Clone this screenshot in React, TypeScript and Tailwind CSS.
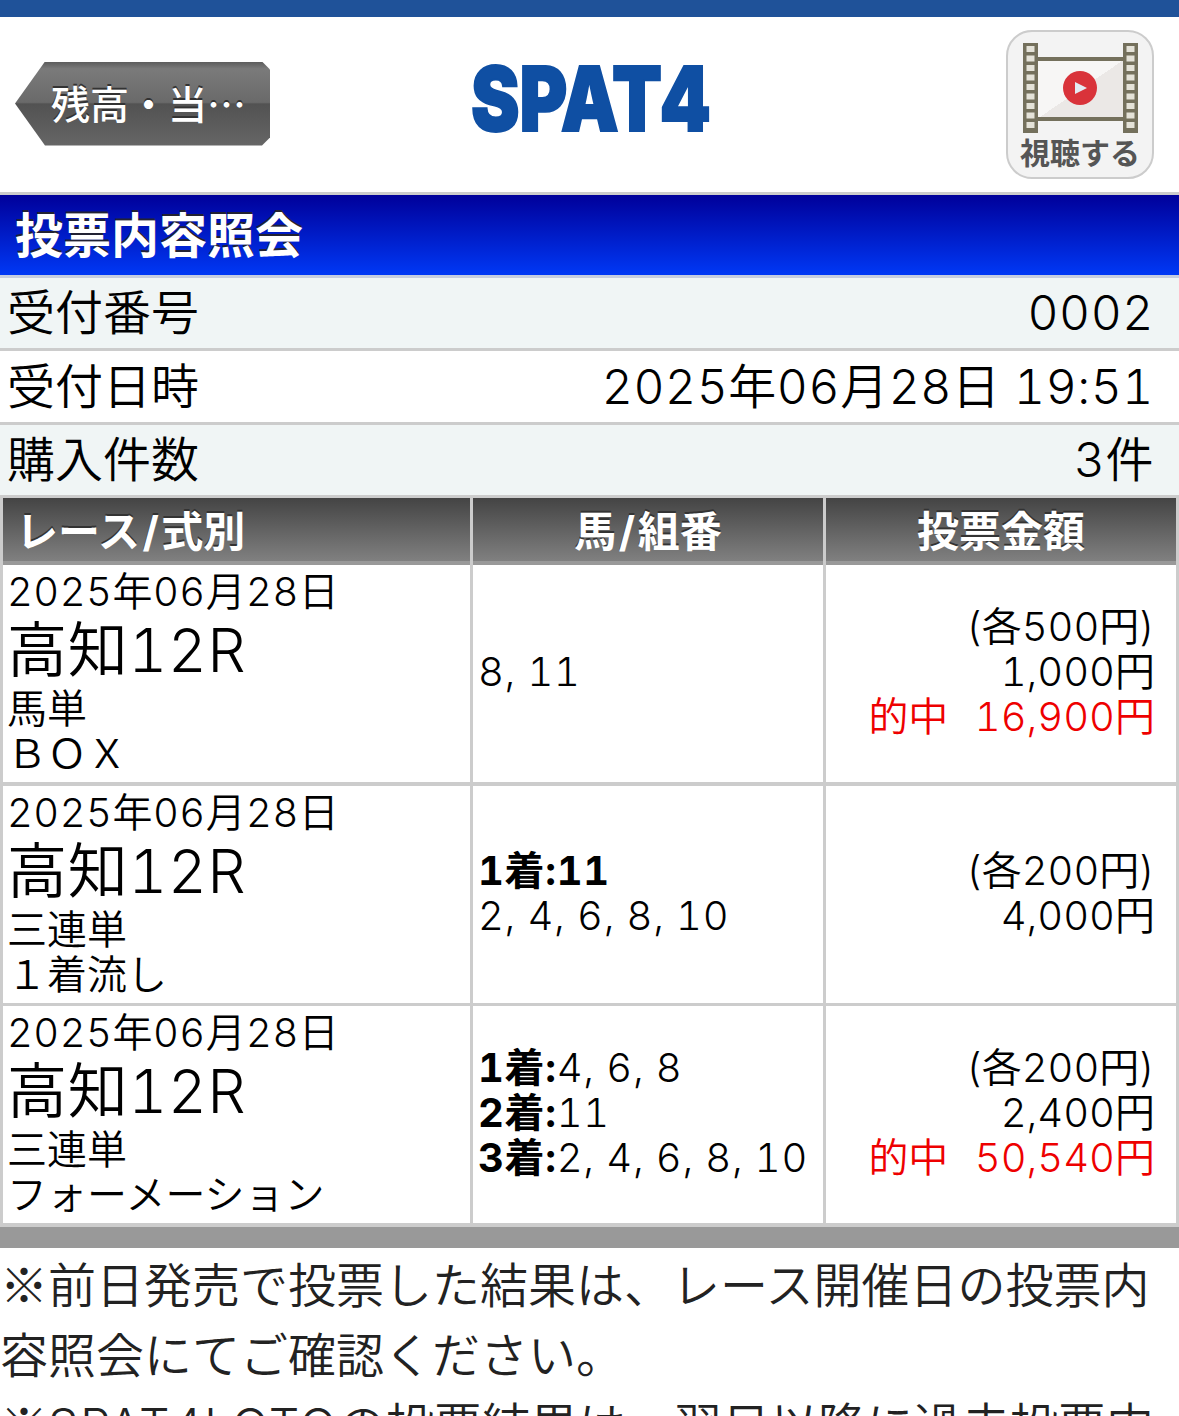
const latin = "font-['Inter','Noto_Sans_CJK_JP',sans-serif] tabular-nums";
const cjk = "font-['Noto_Sans_CJK_JP',sans-serif]";

type Row = {
  race: string;
  kind: string;
  detail: React.ReactNode;
  amounts: { each: string; total: string; win?: string };
};

const rows: Row[] = [
  {
    race: "馬単",
    kind: "ＢＯＸ",
    detail: <div>8, 11</div>,
    amounts: { each: "(各500円)", total: "1,000円", win: "16,900円" },
  },
  {
    race: "三連単",
    kind: "１着流し",
    detail: (
      <>
        <div className="font-bold">1着:11</div>
        <div>2, 4, 6, 8, 10</div>
      </>
    ),
    amounts: { each: "(各200円)", total: "4,000円" },
  },
  {
    race: "三連単",
    kind: "フォーメーション",
    detail: (
      <>
        <div><b className="font-bold">1着:</b>4, 6, 8</div>
        <div><b className="font-bold">2着:</b>11</div>
        <div><b className="font-bold">3着:</b>2, 4, 6, 8, 10</div>
      </>
    ),
    amounts: { each: "(各200円)", total: "2,400円", win: "50,540円" },
  },
];

const heads = [
  { key: "race", label: <>レース<span className="mx-[2.5px]">/</span>式別</> },
  { key: "combo", label: <>馬<span className="mx-[2.5px]">/</span>組番</> },
  { key: "amount", label: "投票金額" },
];

function InfoRow({ label, value, alt, tall }: { label: string; value: string; alt?: boolean; tall?: boolean }) {
  return (
    <div
      className={`box-content flex items-center justify-between border-b-[3px] border-[#ccc] pr-[25px] pl-[7px] text-[48px] leading-none font-[350] text-black ${
        tall ? "h-[71px]" : "h-[70px]"
      } ${alt ? "bg-[#f0f5f5]" : "bg-white"}`}
    >
      <span>{label}</span>
      <span className="tracking-[0.012em]">{value}</span>
    </div>
  );
}

function FilmIcon() {
  const holes = [3, 12.5, 22, 31.5, 41, 50.5, 60, 69.5, 79];
  return (
    <svg viewBox="0 0 115 90" className="h-[90px] w-[115px]">
      <defs>
        <linearGradient id="frame" x1="0" y1="0" x2="1" y2="1">
          <stop offset="0.5" stopColor="#f7f6f5" />
          <stop offset="0.5" stopColor="#ebe8e6" />
        </linearGradient>
      </defs>
      <rect x="14" y="16" width="88" height="60" fill="url(#frame)" />
      <rect x="0" y="0" width="15" height="90" fill="#74705c" />
      <rect x="100" y="0" width="15" height="90" fill="#74705c" />
      <rect x="14" y="14" width="88" height="4" fill="#74705c" />
      <rect x="14" y="74" width="88" height="4" fill="#74705c" />
      {holes.map((y) => (
        <g key={y} fill="#e4e2d8">
          <rect x="3.5" y={y} width="8" height="6" />
          <rect x="103.5" y={y} width="8" height="6" />
        </g>
      ))}
      <circle cx="57" cy="45" r="17" fill="#d9333a" />
      <path d="M52 39 L64 45 L52 51 Z" fill="#e3ebf2" />
    </svg>
  );
}

export default function App() {
  return (
    <div lang="ja" className={`h-[1416px] w-[1179px] overflow-hidden bg-white ${latin}`}>
      <div className="h-[17px] bg-[#1f5299]" />

      <header className="box-content flex h-[175px] items-center border-b-[3px] border-[#ccc] pr-[25px] pl-[15px]">
        <a
          className={`mb-[2px] flex h-[84px] w-[255px] items-center bg-[linear-gradient(#5c5c5c_0%,#7a7a7a_8%,#6a6a6a_48%,#525252_50%,#666_100%)] pb-[2px] pl-[36px] text-[39px] font-medium whitespace-nowrap text-white [clip-path:polygon(30px_0,calc(100%-8px)_0,100%_8px,100%_calc(100%-8px),calc(100%-8px)_100%,30px_100%,0_50%)] [text-shadow:0_-2px_0_#333] ${cjk}`}
        >
          残高・当…
        </a>
        <div className="mb-[11px] ml-[200px] flex h-[68px] w-[240px] items-center justify-center">
          <span className="origin-center scale-x-[.81] text-[90px] leading-none font-black whitespace-nowrap text-[#0f4fa3] [-webkit-text-stroke:2px_#0f4fa3]">
            SPAT4
          </span>
        </div>
        <div className="mb-[1px] ml-auto flex h-[149px] w-[148px] flex-col items-center rounded-[26px] border-2 border-[#ccc] bg-[#f3f3f3] pt-[11px]">
          <FilmIcon />
          <span className={`text-[30px] leading-[36px] font-bold whitespace-nowrap text-[#555] ${cjk}`}>視聴する</span>
        </div>
      </header>

      <h1 className="flex h-[80px] items-center bg-[linear-gradient(#00009a,#0038f5)] pt-[2px] pl-[15px] text-[48px] font-bold text-white [text-shadow:0_-2px_0_#223]">
        投票内容照会
      </h1>
      <div className="h-[3px] bg-[#c5cde0]" />

      <InfoRow alt label="受付番号" value="0002" />
      <InfoRow tall label="受付日時" value="2025年06月28日 19:51" />
      <InfoRow alt label="購入件数" value="3件" />

      <div className="grid grid-cols-[467px_350px_350px] gap-x-[3px] bg-[#ccc] px-[3px]">
        {heads.map((h, i) => (
          <div
            key={h.key}
            className={`flex h-[67px] items-center border-b-[4px] border-[#999] bg-[linear-gradient(#444,#808080)] pt-[4px] text-[42px] font-bold text-white [text-shadow:0_-2px_0_#333] ${
              i === 0 ? "pl-[13px]" : "justify-center"
            }`}
          >
            <span>{h.label}</span>
          </div>
        ))}

        {rows.map((r, i) => (
          <div
            key={i}
            className={`col-span-3 grid grid-cols-subgrid border-[#ccc] text-[40px] leading-[45px] font-[350] text-black ${
              i === 1 ? "border-b-[3px]" : "border-b-[4px]"
            }`}
          >
            <div className="bg-white pt-[4px] pr-[5px] pb-[6px] pl-[4px]">
              <div className="tracking-[0.012em]">2025年06月28日</div>
              <div className="text-[60px] leading-[72px] tracking-[0.012em]">高知12R</div>
              <div>{r.race}</div>
              <div>{r.kind}</div>
            </div>
            <div className="flex flex-col justify-center bg-white px-[5px] pb-[4px] tracking-[0.018em]">{r.detail}</div>
            <div className="flex flex-col justify-center bg-white pr-[21px] pb-[4px] text-right">
              <div>{r.amounts.each}</div>
              <div>{r.amounts.total}</div>
              {r.amounts.win && (
                <div className="whitespace-pre text-[#ee0000]">
                  <span className="mr-[5px]">的中</span>  {r.amounts.win}
                </div>
              )}
            </div>
          </div>
        ))}
      </div>

      <div className="h-[21px] bg-[#999]" />
      <p className={`-mt-[1px] text-[48px] leading-[70px] font-[350] text-[#222] ${cjk}`}>
        ※前日発売で投票した結果は、レース開催日の投票内容照会にてご確認ください。
        <br />
        ※<span className={`tracking-[0.04em] ${latin}`}>SPAT4LOTO</span>の投票結果は、翌日以降に過去投票内容照会にてご確認ください。
      </p>
    </div>
  );
}
